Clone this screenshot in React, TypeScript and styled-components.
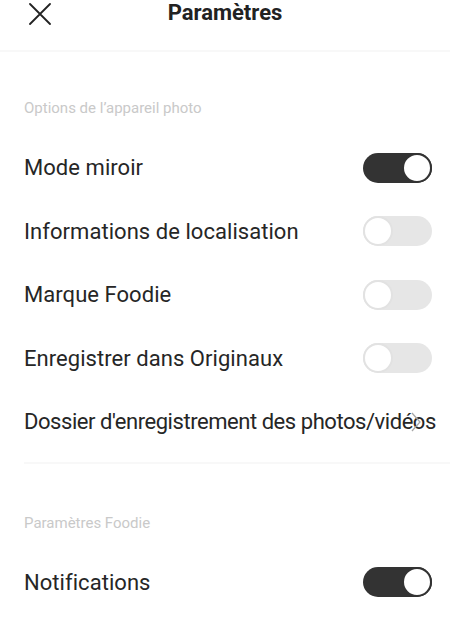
import React from "react";
import styled, { createGlobalStyle } from "styled-components";

const Global = createGlobalStyle`
  html, body { margin: 0; padding: 0; background: #fff; }
  body { font-family: Roboto, "Noto Sans", Arial, sans-serif; -webkit-font-smoothing: antialiased; }
  * { box-sizing: border-box; }
`;

const Page = styled.div`
  width: 450px;
  height: 625px;
  overflow: hidden;
  background: #fff;
  display: flex;
  flex-direction: column;
`;

const Header = styled.header`
  position: relative;
  height: 52px;
  flex-shrink: 0;
  border-bottom: 2px solid #f8f8f8;
  display: flex;
  align-items: flex-start;
  justify-content: center;
`;

const CloseButton = styled.button`
  position: absolute;
  left: 28px;
  top: 2px;
  width: 24px;
  height: 24px;
  padding: 0;
  border: 0;
  background: transparent;
  display: flex;
  align-items: center;
  justify-content: center;
`;

const Title = styled.h1`
  margin: 0;
  font-size: 22px;
  line-height: 26px;
  font-weight: 700;
  color: #222;
`;

const Section = styled.section<{ $top: number }>`
  padding-top: ${(p) => p.$top}px;
  display: flex;
  flex-direction: column;
`;

const SectionLabel = styled.div`
  padding-left: 24px;
  height: 20px;
  line-height: 20px;
  font-size: 15px;
  color: #c9c9c9;
  margin-bottom: 18px;
`;

const Row = styled.div`
  position: relative;
  height: 63.5px;
  display: flex;
  align-items: center;
  padding-left: 24px;
  padding-right: 18px;
  justify-content: space-between;
`;

const RowText = styled.span<{ $tight?: boolean }>`
  font-size: 22px;
  color: #262626;
  white-space: nowrap;
  letter-spacing: ${(p) => (p.$tight ? "-0.45px" : "0.05px")};
`;

const Track = styled.div<{ $on: boolean }>`
  position: relative;
  width: 69px;
  height: 30px;
  border-radius: 15px;
  background: ${(p) => (p.$on ? "#333" : "#e6e6e6")};
  flex-shrink: 0;
`;

const Knob = styled.div<{ $on: boolean }>`
  position: absolute;
  top: 0;
  left: ${(p) => (p.$on ? "39px" : "0")};
  width: 30px;
  height: 30px;
  border-radius: 50%;
  background: #fff;
  border: 2px solid ${(p) => (p.$on ? "#333" : "#e2e2e2")};
`;

const Chevron = styled.svg`
  position: absolute;
  right: 28px;
  top: 50%;
  margin-top: -11px;
`;

const Divider = styled.div`
  margin-top: 8px;
  margin-left: 24px;
  height: 2px;
  background: #f8f8f8;
`;

const Toggle = ({ on }: { on: boolean }) => (
  <Track $on={on}>
    <Knob $on={on} />
  </Track>
);

export default function App() {
  return (
    <Page>
      <Global />
      <Header>
        <CloseButton aria-label="Fermer">
          <svg width="22" height="22" viewBox="0 0 22 22">
            <path d="M1 1 L21 21 M21 1 L1 21" stroke="#222" strokeWidth="1.8" strokeLinecap="round" />
          </svg>
        </CloseButton>
        <Title>Paramètres</Title>
      </Header>
      <Section $top={46}>
        <SectionLabel>Options de l’appareil photo</SectionLabel>
        <Row>
          <RowText>Mode miroir</RowText>
          <Toggle on />
        </Row>
        <Row>
          <RowText>Informations de localisation</RowText>
          <Toggle on={false} />
        </Row>
        <Row>
          <RowText>Marque Foodie</RowText>
          <Toggle on={false} />
        </Row>
        <Row>
          <RowText>Enregistrer dans Originaux</RowText>
          <Toggle on={false} />
        </Row>
        <Row>
          <RowText $tight>Dossier d'enregistrement des photos/vidéos</RowText>
          <Chevron width="12" height="22" viewBox="0 0 12 22">
            <path d="M2 2 L10 11 L2 20" fill="none" stroke="#a8a8a8" strokeWidth="1.3" />
          </Chevron>
        </Row>
        <Divider />
      </Section>
      <Section $top={49}>
        <SectionLabel>Paramètres Foodie</SectionLabel>
        <Row>
          <RowText>Notifications</RowText>
          <Toggle on />
        </Row>
      </Section>
    </Page>
  );
}
